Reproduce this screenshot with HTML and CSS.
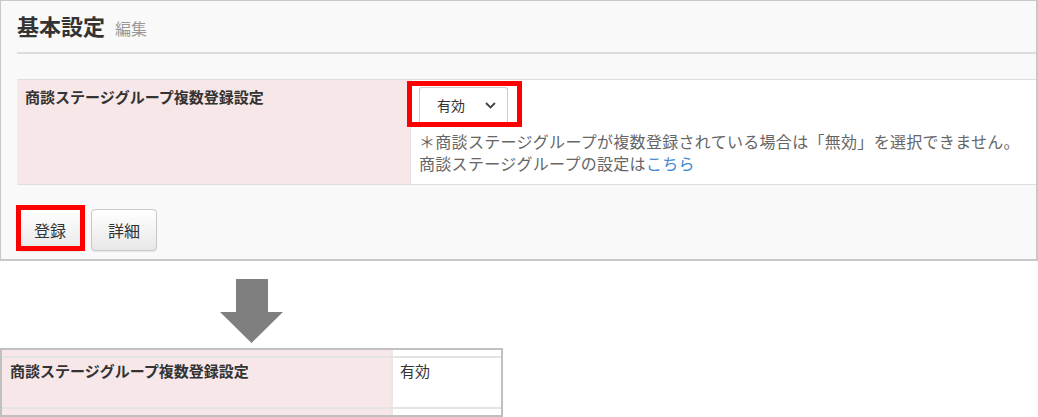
FILE: index.html
```html
<!DOCTYPE html>
<html lang="ja">
<head>
  <meta charset="UTF-8">
  <title>基本設定</title>
  <link rel="stylesheet" href="styles.css">
</head>
<body>
  <div class="panel">
    <div class="panel-header">
      <h1>基本設定</h1>
      <span class="sub">編集</span>
    </div>

    <div class="setting-table">
      <div class="label-cell">商談ステージグループ複数登録設定</div>
      <div class="value-cell">
        <div class="select-wrap">
          <div class="select">
            <span>有効</span>
            <svg width="11" height="7" viewBox="0 0 11 7"><path d="M1 1 L5.5 5.5 L10 1" fill="none" stroke="#444" stroke-width="1.8"/></svg>
          </div>
        </div>
        <p class="note">＊商談ステージグループが複数登録されている場合は「無効」を選択できません。<br>商談ステージグループの設定は<a href="#">こちら</a></p>
      </div>
    </div>

    <div class="button-row">
      <button class="btn mark">登録</button>
      <button class="btn">詳細</button>
    </div>
  </div>

  <svg class="arrow" width="63" height="64" viewBox="0 0 63 64">
    <polygon points="16,0 48,0 48,33 63,33 31.5,64 0,33 16,33" fill="#7f7f7f"/>
  </svg>

  <div class="result-table">
    <div class="r-label"></div>
    <div class="r-value"></div>
    <div class="r-label main">商談ステージグループ複数登録設定</div>
    <div class="r-value main">有効</div>
    <div class="r-label"></div>
    <div class="r-value"></div>
  </div>
</body>
</html>
```

FILE: styles.css
```css
body {
  margin: 0;
  padding: 0;
  background-color: #fff;
  font-family: "Noto Sans CJK JP", "Noto Sans", sans-serif;
  color: #333;
}

.panel {
  box-sizing: border-box;
  width: 1038px;
  height: 261px;
  padding-left: 16px;
  background-color: #f9f9f9;
  border: 1px solid #c8c8c8;
  border-right-width: 2px;
  border-bottom-width: 2px;
}

.panel-header {
  display: flex;
  align-items: baseline;
  gap: 10px;
  padding: 9px 0 12px;
  border-bottom: 2px solid #dedede;
}

.panel-header h1 {
  margin: 0;
  font-size: 22px;
  line-height: 30px;
  font-weight: bold;
  color: #333;
}

.panel-header .sub {
  font-size: 16px;
  color: #999;
}

.setting-table {
  display: grid;
  grid-template-columns: 394px 1fr;
  margin-top: 25px;
  border-top: 1px solid #dedede;
  border-bottom: 1px solid #dedede;
}

.label-cell {
  background-color: #f7e7e8;
  padding: 7px 8px;
  font-size: 15px;
  line-height: 20px;
  font-weight: bold;
  color: #333;
  border-right: 1px solid #e6e6e6;
}

.value-cell {
  background-color: #fff;
  padding: 1px 8px 10px 0;
}

.select-wrap {
  display: inline-block;
  margin-left: -4px;
  padding: 1px 9px 0 7px;
  border: 5px solid #f00;
}

.select {
  box-sizing: border-box;
  display: flex;
  align-items: center;
  justify-content: space-between;
  width: 89px;
  height: 35px;
  padding: 0 11px 0 17px;
  background-color: #fff;
  border: 1px solid #ccc;
  border-bottom: none;
  border-radius: 3px 3px 0 0;
  font-size: 14px;
  color: #333;
}

.note {
  margin: 3px 0 0 8px;
  font-size: 16px;
  line-height: 22px;
  letter-spacing: 0.3px;
  color: #666;
}

.note a {
  color: #3b8ad0;
  text-decoration: none;
}

.button-row {
  display: flex;
  gap: 8px;
  margin-top: 24px;
}

.btn {
  box-sizing: border-box;
  width: 66px;
  height: 42px;
  padding: 0;
  font-family: inherit;
  font-size: 16px;
  color: #333;
  background: linear-gradient(#ffffff, #e8e8e8);
  border: 1px solid #c8c8c8;
  border-radius: 4px;
  box-shadow: 0 1px 1px rgba(0, 0, 0, 0.08);
}

.mark {
  position: relative;
}

.mark::after {
  content: "";
  position: absolute;
  left: -2px;
  top: -5px;
  width: 69px;
  height: 46px;
  box-sizing: border-box;
  border: 5px solid #f00;
}

.arrow {
  display: block;
  margin: 18px 0 0 220px;
}

.result-table {
  box-sizing: border-box;
  display: grid;
  grid-template-columns: 391px 108px;
  grid-template-rows: 6px 49px 6px;
  width: 503px;
  margin-top: 5px;
  border: 2px solid #c0c0c0;
  row-gap: 2px;
  background-color: #e4e4e4;
}

.r-label {
  background-color: #f7e7e8;
  border-right: 2px solid #e8e8e8;
}

.r-value {
  background-color: #fff;
}

.r-label.main {
  padding: 3px 8px;
  font-size: 15px;
  line-height: 20px;
  font-weight: bold;
  color: #333;
}

.r-value.main {
  padding: 3px 7px;
  font-size: 15px;
  line-height: 20px;
  color: #333;
}
```
